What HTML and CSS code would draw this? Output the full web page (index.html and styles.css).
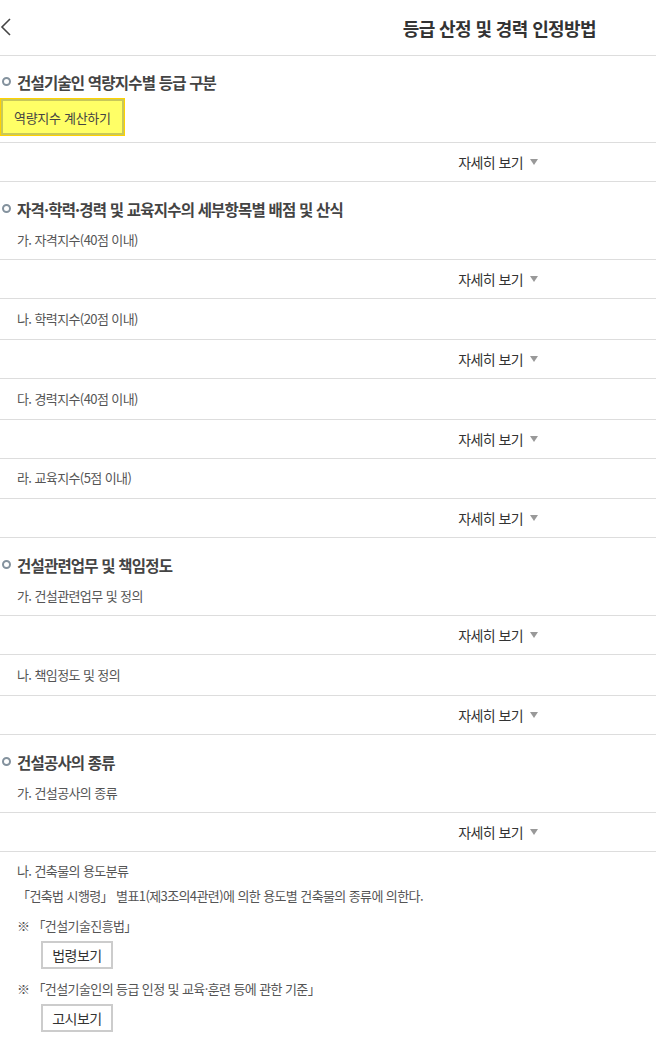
FILE: index.html
```html
<!DOCTYPE html>
<html lang="ko">
<head>
  <meta charset="UTF-8" />
  <meta name="viewport" content="width=device-width, initial-scale=1.0" />
  <title>등급 산정 및 경력 인정방법</title>
  <link rel="stylesheet" href="styles.css">
</head>
<body>
  <div class="header">
    <a class="back" href="#">
      <svg width="12" height="20" viewBox="0 0 12 20"><path d="M10 2 L2 10 L10 18" fill="none" stroke="#444" stroke-width="1.6"/></svg>
    </a>
    <h1>등급 산정 및 경력 인정방법</h1>
  </div>

  <!-- 역량지수 -->
  <div class="sec first">
    <h2 class="sec-title">건설기술인 역량지수별 등급 구분</h2>
    <button class="btn-calc">역량지수 계산하기</button>
  </div>
  <div class="more"><span>자세히 보기</span><i class="arrow"></i></div>

  <!-- 세부항목 -->
  <div class="sec">
    <h2 class="sec-title">자격·학력·경력 및 교육지수의 세부항목별 배점 및 산식</h2>
    <p class="item">가. 자격지수(40점 이내)</p>
  </div>
  <div class="more"><span>자세히 보기</span><i class="arrow"></i></div>
  <p class="item line">나. 학력지수(20점 이내)</p>
  <div class="more"><span>자세히 보기</span><i class="arrow"></i></div>
  <p class="item line">다. 경력지수(40점 이내)</p>
  <div class="more"><span>자세히 보기</span><i class="arrow"></i></div>
  <p class="item line short">라. 교육지수(5점 이내)</p>
  <div class="more"><span>자세히 보기</span><i class="arrow"></i></div>

  <!-- 업무 -->
  <div class="sec">
    <h2 class="sec-title">건설관련업무 및 책임정도</h2>
    <p class="item">가. 건설관련업무 및 정의</p>
  </div>
  <div class="more"><span>자세히 보기</span><i class="arrow"></i></div>
  <p class="item line">나. 책임정도 및 정의</p>
  <div class="more"><span>자세히 보기</span><i class="arrow"></i></div>

  <!-- 공사 종류 -->
  <div class="sec">
    <h2 class="sec-title">건설공사의 종류</h2>
    <p class="item">가. 건설공사의 종류</p>
  </div>
  <div class="more"><span>자세히 보기</span><i class="arrow"></i></div>

  <div class="tail">
    <p class="txt">나. 건축물의 용도분류</p>
    <p class="txt">「건축법 시행령」 별표1(제3조의4관련)에 의한 용도별 건축물의 종류에 의한다.</p>
    <p class="txt note">※ 「건설기술진흥법」</p>
    <button class="btn-law">법령보기</button>
    <p class="txt note">※ 「건설기술인의 등급 인정 및 교육·훈련 등에 관한 기준」</p>
    <button class="btn-law">고시보기</button>
  </div>
</body>
</html>
```

FILE: styles.css
```css
body {
  margin: 0;
  font-family: 'Noto Sans CJK KR', 'Noto Sans', sans-serif;
  color: #333;
  background: #fff;
}

.header {
  display: flex;
  align-items: center;
  height: 55px;
  border-bottom: 1px solid #ddd;
}

.back {
  display: flex;
  margin-top: -2px;
}

.header h1 {
  margin: 0 60px 0 auto;
  font-size: 18px;
  font-weight: 700;
  letter-spacing: -0.6px;
  color: #333;
}

.sec {
  border-top: 1px solid #ddd;
}

.sec.first {
  border-top: none;
  padding-bottom: 6px;
}

.sec-title {
  position: relative;
  margin: 0;
  padding: 15px 0 0 17px;
  font-size: 15.5px;
  line-height: 24px;
  font-weight: 700;
  letter-spacing: -0.8px;
  color: #444;
}

.first .sec-title {
  padding-top: 14px;
}

.sec-title::before {
  content: '';
  position: absolute;
  left: 2px;
  top: 22px;
  width: 5px;
  height: 5px;
  border: 2px solid #84929e;
  border-radius: 50%;
}

.first .sec-title::before {
  top: 21px;
}

.btn-calc {
  display: block;
  margin-top: 4px;
  height: 38px;
  padding: 0 13px;
  background: #ffff66;
  border: 1px solid #ffd200;
  box-shadow: inset 0 0 0 2px #c8c85a;
  font-family: inherit;
  font-size: 13px;
  color: #444;
  letter-spacing: -0.3px;
}

.item {
  margin: 0;
  padding: 9px 0 9px 17px;
  font-size: 13px;
  line-height: 20px;
  color: #555;
  letter-spacing: -0.6px;
}

.item.line {
  border-top: 1px solid #ddd;
  padding: 10px 0 10px 17px;
}

.item.line.short {
  padding: 9px 0 10px 17px;
}

.more {
  display: flex;
  align-items: center;
  justify-content: flex-end;
  height: 38px;
  padding-right: 118px;
  border-top: 1px solid #ddd;
  font-size: 14px;
  color: #333;
  letter-spacing: -0.6px;
}

.arrow {
  width: 0;
  height: 0;
  margin-left: 7px;
  border-left: 4px solid transparent;
  border-right: 4px solid transparent;
  border-top: 6px solid #999;
}

.tail {
  border-top: 1px solid #ddd;
  padding: 9px 0 20px 17px;
}

.txt {
  margin: 0 0 5px;
  font-size: 13px;
  line-height: 20px;
  color: #555;
  letter-spacing: -0.6px;
}

.txt.note {
  margin: 10px 0 5px;
}

.btn-law {
  display: block;
  margin-left: 24px;
  height: 28px;
  width: 72px;
  padding: 0;
  background: #fff;
  border: 2px solid #ccc;
  font-family: inherit;
  font-size: 14px;
  color: #333;
  letter-spacing: -0.5px;
}
```
